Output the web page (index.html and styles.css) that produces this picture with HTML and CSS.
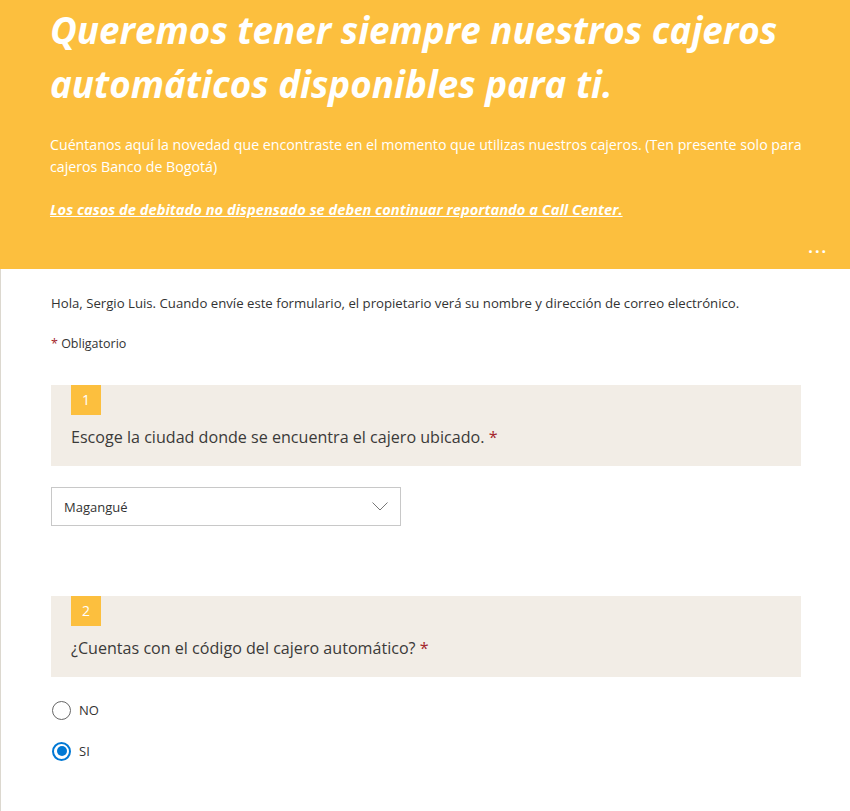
FILE: index.html
```html
<!DOCTYPE html>
<html lang="es">
<head>
<meta charset="utf-8">
<title>Formulario cajeros</title>
<link rel="stylesheet" href="styles.css">
</head>
<body>
<div class="page">
  <header class="hero">
    <h1 class="hero-title">Queremos tener siempre nuestros cajeros automáticos disponibles para ti.</h1>
    <p class="hero-desc">Cuéntanos aquí la novedad que encontraste en el momento que utilizas nuestros cajeros. (Ten presente solo para cajeros Banco de Bogotá)</p>
    <p class="hero-note">Los casos de debitado no dispensado se deben continuar reportando a Call Center.</p>
    <div class="hero-more">···</div>
  </header>
  <main class="body">
    <p class="intro">Hola, Sergio Luis. Cuando envíe este formulario, el propietario verá su nombre y dirección de correo electrónico.</p>
    <p class="required-note"><span class="star">*</span> Obligatorio</p>

    <section class="question">
      <div class="q-head">
        <div class="q-num">1</div>
        <div class="q-text">Escoge la ciudad donde se encuentra el cajero ubicado. <span class="star">*</span></div>
      </div>
      <div class="select">
        <span class="select-value">Magangué</span>
        <svg class="chev" width="16" height="9" viewBox="0 0 16 9"><path d="M0.5 0.5 L8 8 L15.5 0.5" fill="none" stroke="#777" stroke-width="1"/></svg>
      </div>
    </section>

    <section class="question q2">
      <div class="q-head">
        <div class="q-num">2</div>
        <div class="q-text">¿Cuentas con el código del cajero automático? <span class="star">*</span></div>
      </div>
      <div class="options">
        <div class="option"><span class="radio"></span><span class="opt-label">NO</span></div>
        <div class="option"><span class="radio checked"></span><span class="opt-label">SI</span></div>
      </div>
    </section>
  </main>
</div>
</body>
</html>
```

FILE: styles.css
```css
html, body {
  margin: 0;
  padding: 0;
  background: #fff;
  height: 100%;
}
body {
  font-family: "Segoe UI", "Open Sans", sans-serif;
  color: #333;
  overflow: hidden;
}
.page {
  width: 850px;
  height: 100%;
  display: flex;
  flex-direction: column;
}
.hero {
  background: #fcbf3e;
  height: 269px;
  flex: none;
  box-sizing: border-box;
  padding: 3px 40px 0 50px;
  position: relative;
  color: #fff;
}
.hero-title {
  margin: 0;
  font-size: 36.8px;
  line-height: 54px;
  font-weight: 700;
  font-style: italic;
}
.hero-desc {
  margin: 23px 0 0 0;
  font-size: 14.2px;
  line-height: 22px;
}
.hero-note {
  margin: 20px 0 0 0;
  font-size: 14.7px;
  line-height: 22px;
  font-weight: 700;
  font-style: italic;
  text-decoration: underline;
}
.hero-more {
  position: absolute;
  right: 22px;
  bottom: 7px;
  font-size: 16px;
  letter-spacing: 2px;
  font-weight: 700;
}
.body {
  flex: 1;
  border-left: 1px solid #dcd8cf;
  padding: 24px 49px 0 50px;
}
.intro {
  margin: 0;
  font-size: 13.2px;
  line-height: 20px;
}
.required-note {
  margin: 21px 0 0 0;
  font-size: 12.5px;
  line-height: 20px;
}
.star {
  color: #a4262c;
}
.question {
  margin-top: 31px;
}
.q2 {
  margin-top: 70px;
}
.q-head {
  background: #f2ede6;
  padding: 0 20px 18px 20px;
}
.q-num {
  width: 30px;
  height: 30px;
  background: #fcbf3e;
  color: #fff;
  font-size: 14px;
  line-height: 30px;
  text-align: center;
}
.q-text {
  margin-top: 11px;
  font-size: 16.1px;
  line-height: 22px;
  color: #3b3a39;
}
.select {
  margin-top: 21px;
  width: 350px;
  height: 39px;
  box-sizing: border-box;
  border: 1px solid #c8c8c8;
  display: flex;
  align-items: center;
  justify-content: space-between;
  padding: 0 12px 0 12px;
}
.select-value {
  font-size: 13px;
}
.chev {
  display: block;
}
.options {
  margin-top: 23px;
  display: flex;
  flex-direction: column;
  gap: 21px;
}
.option {
  display: flex;
  align-items: center;
  gap: 8px;
  height: 20px;
}
.radio {
  width: 19px;
  height: 19px;
  box-sizing: border-box;
  border: 1px solid #666;
  border-radius: 50%;
  margin-left: 1px;
  position: relative;
}
.radio.checked {
  border: 2px solid #0078d4;
}
.radio.checked::after {
  content: "";
  position: absolute;
  left: 2.5px;
  top: 2.5px;
  width: 10px;
  height: 10px;
  border-radius: 50%;
  background: #0078d4;
}
.opt-label {
  font-size: 13px;
}
```
